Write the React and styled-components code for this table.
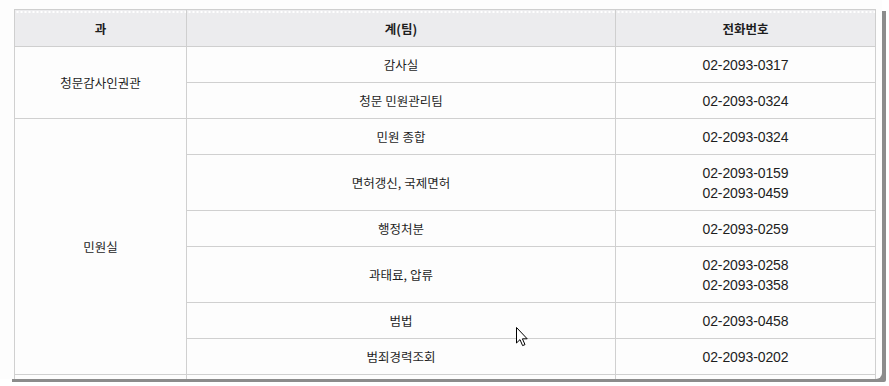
import React from 'react';
import styled, { createGlobalStyle } from 'styled-components';

const GlobalStyle = createGlobalStyle`
  body {
    margin: 0;
    background: #ffffff;
    font-family: "Noto Sans CJK KR", "Noto Sans", sans-serif;
  }
`;

const Page = styled.div`
  width: 889px;
  height: 386px;
  overflow: hidden;
`;

const Window = styled.div`
  width: 882px;
  height: 379px;
  background: #fdfdfd;
  overflow: hidden;
  box-sizing: border-box;
  padding: 9px 0 0 14px;
  border-bottom-right-radius: 6px;
  box-shadow: 8px 7px 0 -4px #8c8c8c;
  position: relative;
`;

const Table = styled.table`
  width: 861px;
  table-layout: fixed;
  border-collapse: collapse;
  color: #1e1e1e;
`;

const HeadCell = styled.th`
  height: 36px;
  padding: 0;
  background: #ececee;
  border: 1px solid #cfcfcf;
  font-size: 12.5px;
  font-weight: 700;
  text-align: center;
  background-image: radial-gradient(circle, #ffffff 0.8px, transparent 1px);
  background-size: 4px 4px;
  background-repeat: repeat-x;
  background-position: 0 0;
`;

const Cell = styled.td`
  height: ${p => (p.$tall ? 55 : 35)}px;
  padding: 0;
  border: 1px solid #d0d0d0;
  text-align: center;
  vertical-align: middle;
  font-size: 12.5px;
  line-height: 20px;
`;

const Phone = styled.div`
  font-family: "Liberation Sans", Arial, sans-serif;
  font-size: 14px;
  line-height: 20px;
  letter-spacing: -0.1px;
`;

const Cursor = styled.svg`
  position: absolute;
  left: 516px;
  top: 327px;
`;

const groups = [
  {
    dept: '청문감사인권관',
    rows: [
      { team: '감사실', phones: ['02-2093-0317'] },
      { team: '청문 민원관리팀', phones: ['02-2093-0324'] },
    ],
  },
  {
    dept: '민원실',
    rows: [
      { team: '민원 종합', phones: ['02-2093-0324'] },
      { team: '면허갱신, 국제면허', phones: ['02-2093-0159', '02-2093-0459'] },
      { team: '행정처분', phones: ['02-2093-0259'] },
      { team: '과태료, 압류', phones: ['02-2093-0258', '02-2093-0358'] },
      { team: '범법', phones: ['02-2093-0458'] },
      { team: '범죄경력조회', phones: ['02-2093-0202'] },
    ],
  },
  {
    dept: '',
    rows: [{ team: '', phones: [''] }],
  },
];

export default function App() {
  return (
    <Page>
      <GlobalStyle />
      <Window>
        <Table>
          <colgroup>
            <col style={{ width: 172 }} />
            <col style={{ width: 429 }} />
            <col style={{ width: 260 }} />
          </colgroup>
          <thead>
            <tr>
              <HeadCell>과</HeadCell>
              <HeadCell>계(팀)</HeadCell>
              <HeadCell>전화번호</HeadCell>
            </tr>
          </thead>
          <tbody>
            {groups.map(g =>
              g.rows.map((r, i) => {
                const tall = r.phones.length > 1;
                return (
                  <tr key={g.dept + r.team}>
                    {i === 0 && <Cell rowSpan={g.rows.length}>{g.dept}</Cell>}
                    <Cell $tall={tall}>{r.team}</Cell>
                    <Cell $tall={tall}>
                      {r.phones.map(p => (
                        <Phone key={p}>{p}</Phone>
                      ))}
                    </Cell>
                  </tr>
                );
              })
            )}
          </tbody>
        </Table>
        <Cursor width="13" height="20" viewBox="0 0 13 20">
          <path
            d="M0.5 0.5 L0.5 16 L4 12.6 L6.6 18.6 L9 17.6 L6.4 11.8 L11.2 11.8 Z"
            fill="#ffffff"
            stroke="#000000"
            strokeWidth="1"
            strokeLinejoin="miter"
          />
        </Cursor>
      </Window>
    </Page>
  );
}
